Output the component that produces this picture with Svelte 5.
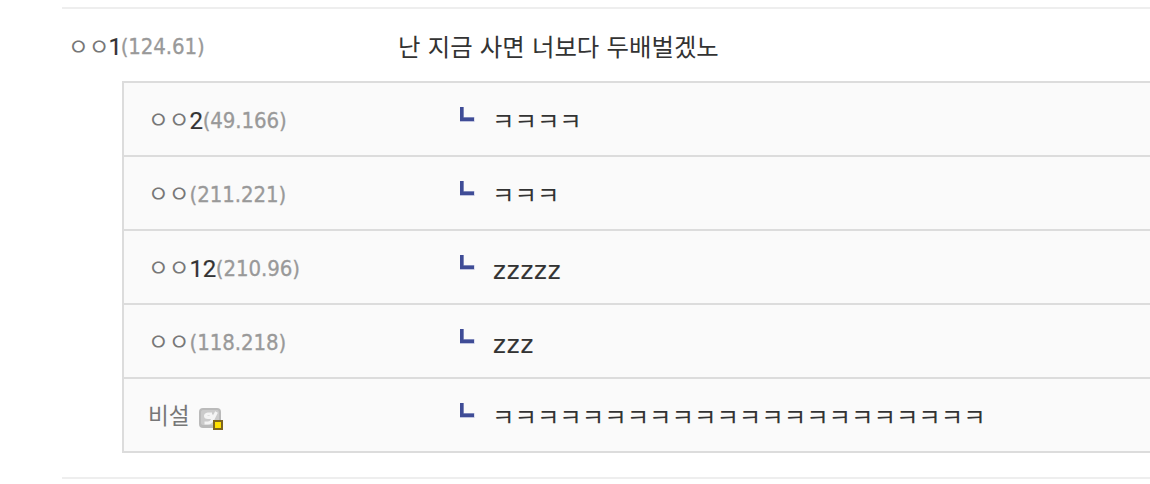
<script>
  const comment = { nick: 'ㅇㅇ', num: '1', ip: '124.61', text: '난 지금 사면 너보다 두배벌겠노' };

  const replies = [
    { nick: 'ㅇㅇ', num: '2', ip: '49.166', text: 'ㅋㅋㅋㅋ' },
    { nick: 'ㅇㅇ', num: '', ip: '211.221', text: 'ㅋㅋㅋ' },
    { nick: 'ㅇㅇ', num: '12', ip: '210.96', text: 'zzzzz' },
    { nick: 'ㅇㅇ', num: '', ip: '118.218', text: 'zzz' },
    { nick: '비설', member: true, text: 'ㅋㅋㅋㅋㅋㅋㅋㅋㅋㅋㅋㅋㅋㅋㅋㅋㅋㅋㅋㅋㅋㅋ' }
  ];
</script>

{#snippet writer(item)}
  <div class="writer">
    <span class="nick">{item.nick}</span>
    {#if item.num}<span class="num">{item.num}</span>{/if}
    {#if item.ip}<span class="ip">({item.ip})</span>{/if}
    {#if item.member}
      <svg class="gallog" width="26" height="24" viewBox="0 0 26 24">
        <rect x="1" y="1" width="22" height="20" rx="4" fill="#bababa" />
        <rect x="3" y="3" width="18" height="15" rx="2" fill="#cbcbcb" />
        <path d="M14 7H10Q7.500 7.500 7.500 9T10 10.500H12.500L14 7M18.500 5L15 12Q13 16 10 16H6.500" fill="none" stroke="#f4f4f4" stroke-width="3" />
        <rect x="15" y="13" width="10" height="10" fill="#7d6420" />
        <rect x="17" y="15" width="6" height="6" fill="#ffe000" />
      </svg>
    {/if}
  </div>
{/snippet}

<ul class="comments">
  <li class="comment">
    <div class="row">
      {@render writer(comment)}
      <p class="text">{comment.text}</p>
    </div>
    <ul class="replies">
      {#each replies as reply}
        <li class="reply">
          {@render writer(reply)}
          <svg class="arrow" width="16" height="16" viewBox="0 0 16 16">
            <path d="M0 0H4V10H14.500V15H0Z" fill="#bfc3df" />
            <path d="M0 0H3.500V10.500H14V14H0Z" fill="#3f4c96" />
          </svg>
          <p class="text" class:latin={reply.text.startsWith('z')}>{reply.text}</p>
        </li>
      {/each}
    </ul>
  </li>
</ul>

<style>
  :global(body) {
    background: #fff;
    overflow: hidden;
  }

  ul {
    margin: 0;
    padding: 0;
    list-style: none;
  }

  .comments {
    padding: 7px 0 0 62px;
    font-family: "Noto Sans CJK KR", sans-serif;
    color: #333;
  }

  .comment {
    border-top: 2px solid #eee;
    border-bottom: 2px solid #eee;
    padding-bottom: 24px;
  }

  .row {
    display: flex;
    align-items: center;
    height: 72px;
    padding-left: 6px;
  }

  .row .writer {
    width: 330px;
  }

  .row .writer,
  .row .text {
    padding-top: 2px;
  }

  .replies {
    margin-left: 60px;
    border: 2px solid #dcdcdc;
    border-right: 0;
    background: #fafafa;
  }

  .reply {
    display: flex;
    align-items: center;
    height: 72px;
    padding-left: 24px;
  }

  .reply + .reply {
    border-top: 2px solid #dcdcdc;
  }

  .writer {
    display: flex;
    align-items: center;
    flex: none;
    width: 312px;
    height: 30px;
    line-height: 30px;
    white-space: nowrap;
  }

  .nick {
    color: #777;
    font-size: 22.6px;
  }

  .num {
    padding-top: 4px;
    font-family: Roboto, sans-serif;
    font-size: 24px;
    letter-spacing: -0.4px;
    -webkit-text-stroke: 0.2px #333;
  }

  .row .num {
    padding-top: 2px;
    margin-left: -1px;
  }

  .ip {
    padding-top: 3px;
    color: #999;
    font-family: "DejaVu Sans Condensed", "DejaVu Sans", sans-serif;
    font-stretch: condensed;
    font-size: 22px;
    letter-spacing: -0.08px;
    -webkit-text-stroke: 0.3px #999;
  }

  .row .ip {
    padding-top: 1px;
    margin-left: -1px;
  }

  .gallog {
    margin: 7px 0 0 8px;
  }

  .arrow {
    flex: none;
    margin: -8px 16px 0 0;
  }

  .text {
    margin: 0;
    padding-top: 1px;
    font-size: 24.4px;
    line-height: 30px;
    word-spacing: 1.8px;
    white-space: nowrap;
  }

  .latin {
    padding: 8px 0 0 1px;
    font-family: "DejaVu Sans", sans-serif;
    letter-spacing: 0.9px;
    -webkit-text-stroke: 0.2px #333;
  }
</style>
